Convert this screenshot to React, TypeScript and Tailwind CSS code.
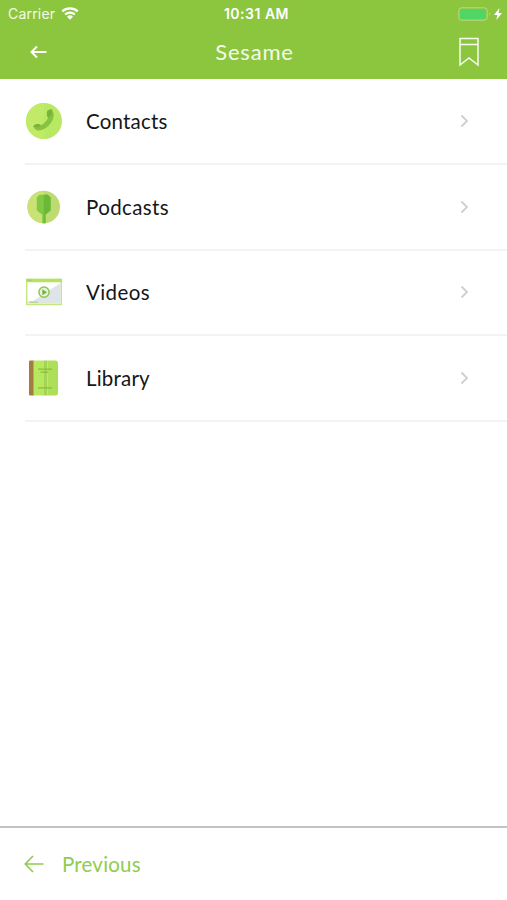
import type { ReactNode } from 'react';

function PhoneIcon() {
  return (
    <svg width="36" height="36" viewBox="0 0 36 36">
      <circle cx="18" cy="18" r="18" fill="#b9e865" />
      <path d="M18 0a18 18 0 0 0 0 36z" fill="#c0ea68" />
      <path
        d="M21.500 7.800q2-1.600 4.200-1.500c2.200 2.700 2.700 6.100 1.400 9.400-2.700 6.300-7 10.300-13.300 11.800-2.400.5-4.700-.8-6.500-3.800 1-2.100 2.900-3.100 5.600-2.700l1.900 1.300c3.300-1.400 5.800-3.900 7.400-7.500l-1.100-1.800q-.7-2.800.4-5.200z"
        fill="#86c440"
      />
      <path d="M7.300 23.700c1-2.100 2.900-3.100 5.600-2.700l1.900 1.300-2.300 2.200zM21.500 7.800q2-1.600 4.200-1.500l.3 5.700-3.800 2.800-1.100-1.800q-.7-2.800.4-5.200z" fill="#78b33c" />
    </svg>
  );
}

function MicIcon() {
  return (
    <svg width="36" height="36" viewBox="0 0 36 36">
      <circle cx="17.700" cy="18" r="16.300" fill="#bddb70" />
      <path d="M17.700 1.700a16.300 16.300 0 0 0 0 32.600z" fill="#cae275" />
      <path d="m10.800 8.500 2.700-2.700h8.400l2.700 2.700v13l-4.300 3.500h-.8v9.200h-3.300V25h-1.100l-4.300-3.500z" fill="#7fca42" />
      <path d="m17.700 5.800h4.200l2.700 2.700v13l-4.300 3.500h-.8v9.200h-1.800z" fill="#6cb839" />
    </svg>
  );
}

function VideoIcon() {
  return (
    <svg width="36" height="36" viewBox="0 0 36 36">
      <rect x="0.700" y="5.500" width="34.600" height="25" fill="#fff" stroke="#c4e77b" strokeWidth="1.400" />
      <path d="M34.600 9v18H7z" fill="#dfe4e8" />
      <path d="M1.400 27h33.200v2.700H1.400z" fill="#dfe7d9" />
      <path d="M0 4.800h36v3.500H0z" fill="#b7e261" />
      <path d="M1.500 6.200h5M4 28.200h8" stroke="#9bc36b" strokeWidth="0.800" />
      <circle cx="18" cy="18.200" r="5.100" fill="#eaf2df" stroke="#8fc651" strokeWidth="1.500" />
      <path d="m16.300 15.200 4.800 3-4.800 3z" fill="#70b43d" />
    </svg>
  );
}

function BookIcon() {
  return (
    <svg width="36" height="36" viewBox="0 0 36 36">
      <path d="M3 1.500Q3 .5 4 .5h4v35H4q-1 0-1-1z" fill="#a47c43" />
      <path d="M7.500.5H18v35H7.500z" fill="#b8e85e" />
      <path d="M18 .5h3.500v35H18z" fill="#a3d455" />
      <path d="M21.500.5h8Q32 .5 32 3v30q0 2.500-2.500 2.500h-8z" fill="#addf58" />
      <path d="M12 9.200h14M14.500 12.200h7.500M12 27.800h14" stroke="#85bd43" strokeWidth="1.200" />
    </svg>
  );
}

function Row({ label, icon, tracking }: { label: string; icon: ReactNode; tracking: string }) {
  return (
    <li className="ml-[25px] flex h-[85.600px] items-center border-b-2 border-[#f3f3f3] pr-[38px]">
      <span className="ml-px">{icon}</span>
      <span className={`ml-6 flex-1 text-[20.500px] leading-6 text-[#161616] ${tracking}`}>{label}</span>
      <svg width="9" height="14" viewBox="0 0 9 14" fill="none">
        <path d="m1.500 1.500 5.500 5.500-5.500 5.500" stroke="#d0d0d2" strokeWidth="1.900" />
      </svg>
    </li>
  );
}

export default function App() {
  return (
    <div className="flex h-[900px] w-[507px] flex-col overflow-hidden bg-white font-[Lato,sans-serif]">
      <header className="h-[79px] shrink-0 bg-[#8cc63e] text-white">
        <div className="grid h-[27px] grid-cols-3 items-center pr-[5px] pl-[8px] font-[Inter,sans-serif] text-[14px] leading-none">
          <div className="flex items-center gap-[6px] text-[#f4faeb]">
            <span className="tracking-[0.200px]">Carrier</span>
            <svg width="18" height="13" viewBox="0 0 18 13" fill="none">
              <path d="M1.300 4.400a11.300 11.300 0 0 1 15.400 0M4.100 7.500a7.200 7.200 0 0 1 9.800 0" stroke="#fff" strokeWidth="2.200" />
              <path d="M6 9.700a4.500 4.500 0 0 1 6 0l-3 3z" fill="#fff" />
            </svg>
          </div>
          <span className="pl-[3px] text-center font-semibold tracking-[0.500px] whitespace-nowrap">10:31 AM</span>
          <div className="flex items-center justify-end gap-[3px]">
            <svg width="33" height="14" viewBox="0 0 33 14" fill="none">
              <rect x="0.800" y="0.800" width="28.400" height="12.400" rx="3" stroke="#b8db87" />
              <rect x="2" y="2" width="26" height="10" rx="1.800" fill="#4fd665" />
              <path d="M31 5q1.500 2 0 4z" fill="#c4e29b" />
            </svg>
            <svg width="8" height="12" viewBox="0 0 8 12">
              <path d="M5.500 0 0 6.900h3.300L2.400 12 8 4.900H4.700z" fill="#fff" />
            </svg>
          </div>
        </div>
        <div className="flex h-[50px] items-center pr-[28px] pl-[30px]">
          <svg width="18" height="14" viewBox="0 0 18 14" fill="none">
            <path d="M16.500 7H1.800M7 1.500 1.500 7 7 12.500" stroke="#fff" strokeWidth="2" />
          </svg>
          <h1 className="flex-1 pl-[2px] text-center text-[22px] leading-6 font-normal tracking-[0.800px] text-[#f4faeb]">Sesame</h1>
          <svg width="20" height="30" viewBox="0 0 20 30" fill="none">
            <path d="M1 1.500h18v26.500l-9-7-9 7zM1 7.500h18" stroke="#f6faef" strokeWidth="1.500" />
          </svg>
        </div>
      </header>
      <ul className="flex-1 pt-[0.500px]">
        <Row label="Contacts" tracking="tracking-[0.200px]" icon={<PhoneIcon />} />
        <Row label="Podcasts" tracking="tracking-[0.400px]" icon={<MicIcon />} />
        <Row label="Videos" tracking="tracking-[0.400px]" icon={<VideoIcon />} />
        <Row label="Library" tracking="tracking-[0.200px]" icon={<BookIcon />} />
      </ul>
      <footer className="flex h-[74px] shrink-0 items-center border-t-2 border-[#c2c2c2] pb-px pl-[24px] text-[#8fcc50]">
        <svg width="20" height="18" viewBox="0 0 20 18" fill="none">
          <path d="M19.500 9H1.800M9 1 1.300 9 9 17" stroke="currentColor" strokeWidth="1.700" />
        </svg>
        <span className="ml-[18px] text-[20.500px] leading-6 tracking-[0.200px]">Previous</span>
      </footer>
    </div>
  );
}
